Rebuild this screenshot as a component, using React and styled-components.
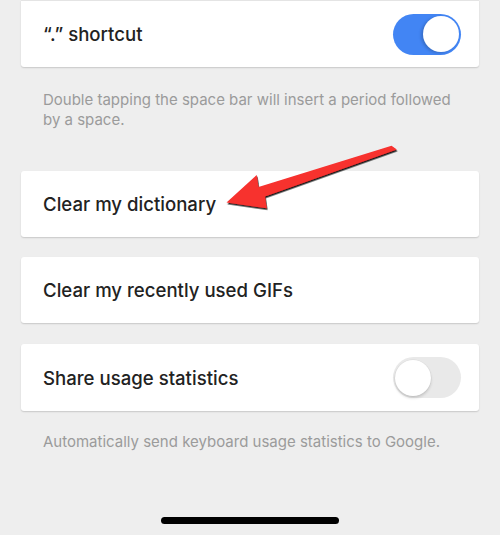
import React from "react";
import styled, { createGlobalStyle } from "styled-components";

const Global = createGlobalStyle`
  html, body { margin: 0; padding: 0; background: #eeeeee; }
  body { width: 500px; height: 535px; overflow: hidden; font-family: Inter, "Noto Sans", sans-serif; }
`;

const Screen = styled.div`
  position: relative;
  width: 500px;
  height: 535px;
  background: #eeeeee;
  box-sizing: border-box;
  padding: 0 21px;
  display: flex;
  flex-direction: column;
`;

const Card = styled.div`
  background: #ffffff;
  border-radius: 3px;
  box-shadow: 0 1px 1.5px rgba(0, 0, 0, 0.16);
  height: ${(p) => p.$h || 66}px;
  margin-top: ${(p) => p.$mt || 0}px;
  box-sizing: border-box;
  display: flex;
  align-items: center;
  justify-content: space-between;
  padding: 0 18px 0 22px;
  border-top: ${(p) => (p.$divider ? "1.5px solid #e4e4e4" : "none")};
  border-top-left-radius: ${(p) => (p.$divider ? 0 : 3)}px;
  border-top-right-radius: ${(p) => (p.$divider ? 0 : 3)}px;
`;

const Label = styled.span`
  font-size: 18.6px;
  font-weight: 500;
  color: #222222;
  letter-spacing: 0;
`;

const Note = styled.p`
  margin: ${(p) => p.$mt || 0}px 0 0;
  padding: 0 8px 0 22px;
  font-size: 15px;
  line-height: 20px;
  color: #9b9b9b;
  font-weight: 400;
`;

const Track = styled.div`
  position: relative;
  width: 68px;
  height: 41px;
  border-radius: 21px;
  box-sizing: border-box;
  background: ${(p) => (p.$on ? "#4285f4" : "#e9e9e9")};
  flex-shrink: 0;
`;

const Knob = styled.div`
  position: absolute;
  top: 2.5px;
  left: ${(p) => (p.$on ? 29.5 : 2)}px;
  width: 36px;
  height: 36px;
  border-radius: 50%;
  background: #ffffff;
  box-shadow: ${(p) =>
    p.$on
      ? "-2px 1px 3px rgba(0,0,0,0.18)"
      : "0 2px 3px rgba(0,0,0,0.16), 0 0 0 0.5px rgba(0,0,0,0.06)"};
`;

const HomeBar = styled.div`
  position: absolute;
  left: 161px;
  top: 517px;
  width: 178px;
  height: 7px;
  border-radius: 4px;
  background: #000000;
`;

const ArrowSvg = styled.svg`
  position: absolute;
  left: 0;
  top: 0;
  width: 500px;
  height: 535px;
  pointer-events: none;
  overflow: visible;
`;

const Toggle = ({ on }) => (
  <Track $on={on}>
    <Knob $on={on} />
  </Track>
);

export default function App() {
  return (
    <>
      <Global />
      <Screen>
        <Card $h={67} $divider>
          <Label>“.” shortcut</Label>
          <Toggle on />
        </Card>
        <Note $mt={23}>
          Double tapping the space bar will insert a period followed by a space.
        </Note>
        <Card $mt={41}>
          <Label>Clear my dictionary</Label>
        </Card>
        <Card $mt={20}>
          <Label>Clear my recently used GIFs</Label>
        </Card>
        <Card $mt={21} $h={67}>
          <Label>Share usage statistics</Label>
          <Toggle />
        </Card>
        <Note $mt={21}>
          Automatically send keyboard usage statistics to Google.
        </Note>
        <HomeBar />
        <ArrowSvg viewBox="0 0 500 535">
          <defs>
            <filter id="sh" x="-20%" y="-20%" width="140%" height="160%">
              <feDropShadow dx="0.8" dy="1.6" stdDeviation="0.6" floodColor="#000" floodOpacity="0.9" />
            </filter>
          </defs>
          <polygon
            filter="url(#sh)"
            fill="#f7302f"
            points="226.5,202.5 256.7,175 258.5,187 391.5,145.8 396.8,149.5 265,196.5 266.7,208.3"
          />
        </ArrowSvg>
      </Screen>
    </>
  );
}
